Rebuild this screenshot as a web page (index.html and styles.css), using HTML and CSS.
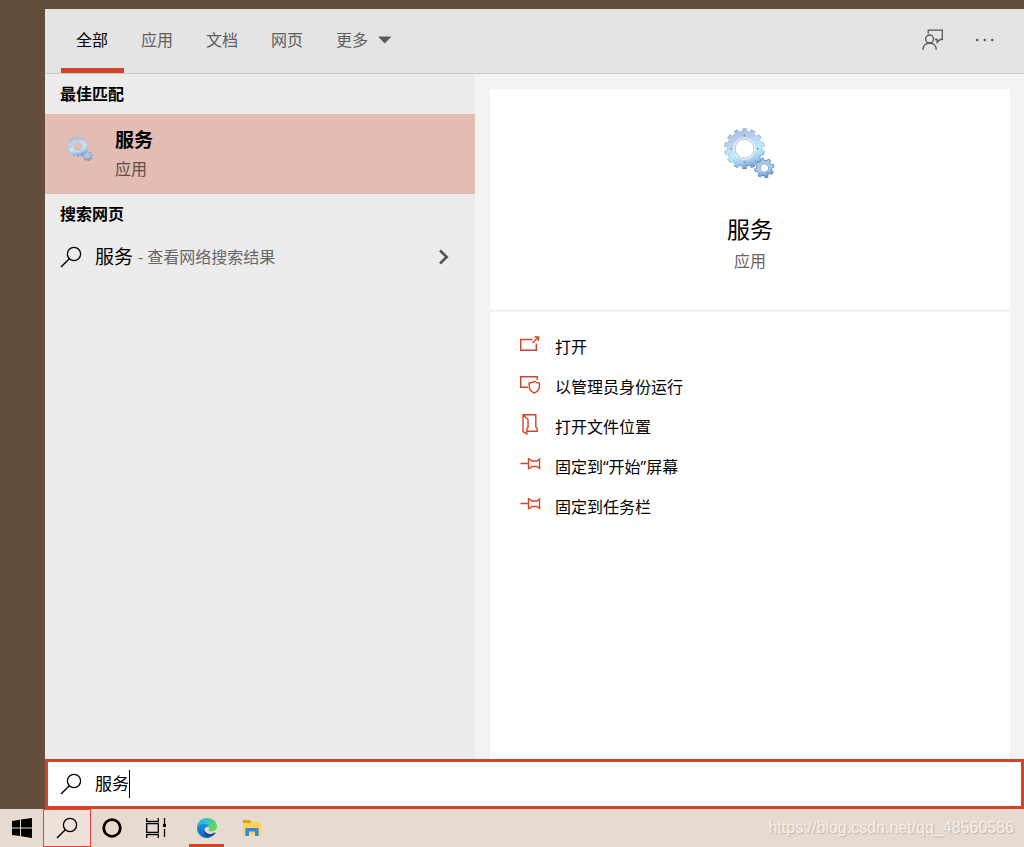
FILE: index.html
```html
<!DOCTYPE html>
<html lang="zh-CN">
<head>
<meta charset="utf-8">
<meta name="viewport" content="width=device-width, initial-scale=1">
<title>服务</title>
<link rel="stylesheet" href="styles.css">
</head>
<body>
<svg class="defs" aria-hidden="true">
  <defs>
    <linearGradient id="steel" gradientUnits="userSpaceOnUse" x1="12" y1="0" x2="25" y2="42">
      <stop offset="0" stop-color="#a3bbdd"/>
      <stop offset="0.3" stop-color="#bccfee"/>
      <stop offset="0.6" stop-color="#bdeefc"/>
      <stop offset="0.8" stop-color="#a4cdf2"/>
      <stop offset="1" stop-color="#6793c6"/>
    </linearGradient>
    <linearGradient id="steel-small" gradientUnits="userSpaceOnUse" x1="38" y1="30" x2="44" y2="50">
      <stop offset="0" stop-color="#b3c4de"/>
      <stop offset="0.6" stop-color="#a5cdf0"/>
      <stop offset="1" stop-color="#5f8cc2"/>
    </linearGradient>
    <linearGradient id="edge" gradientUnits="userSpaceOnUse" x1="8" y1="0" x2="28" y2="50">
      <stop offset="0" stop-color="#93a9c8"/>
      <stop offset="0.5" stop-color="#8fc6ea"/>
      <stop offset="0.8" stop-color="#5c88ba"/>
      <stop offset="1" stop-color="#5a80b0"/>
    </linearGradient>
    <symbol id="gears" viewBox="0 0 54 54">
      <circle cx="21.5" cy="20.7" r="18.2" fill="none" stroke="url(#edge)" stroke-width="4.4" pathLength="28" stroke-dasharray="1.1 0.9" stroke-dashoffset="-0.45"/>
      <circle cx="21.5" cy="20.7" r="13.9" fill="none" stroke="url(#edge)" stroke-width="7.8"/>
      <circle cx="21.5" cy="20.7" r="17.6" fill="none" stroke="url(#steel)" stroke-width="4" pathLength="28" stroke-dasharray="0.9 1.1" stroke-dashoffset="-0.55"/>
      <circle cx="21.5" cy="20.7" r="13.6" fill="none" stroke="url(#steel)" stroke-width="7.2"/>
      <circle cx="21.5" cy="20.7" r="10.4" fill="none" stroke="#e5edf4" stroke-width="1.6"/>
      <circle cx="21.5" cy="20.7" r="9.4" fill="none" stroke="#a9b9ca" stroke-width="0.8"/>
      <g fill="#7590ac"><circle cx="21.5" cy="7.5" r="0.9"/><circle cx="21.5" cy="34" r="0.9"/><circle cx="8.3" cy="20.7" r="0.9"/><circle cx="34.7" cy="20.7" r="0.9"/></g>
      <circle cx="41.3" cy="40" r="8.4" fill="none" stroke="url(#edge)" stroke-width="3.6" pathLength="16" stroke-dasharray="1 1" stroke-dashoffset="-0.9"/>
      <circle cx="41.3" cy="40" r="6" fill="none" stroke="url(#edge)" stroke-width="4.4"/>
      <circle cx="41.3" cy="40" r="7.4" fill="none" stroke="url(#steel-small)" stroke-width="4" pathLength="16" stroke-dasharray="0.7 1.3" stroke-dashoffset="-1.05"/>
      <circle cx="41.3" cy="40" r="5.8" fill="none" stroke="url(#steel-small)" stroke-width="3.2"/>
    </symbol>
    <symbol id="search" viewBox="0 0 22 22">
      <circle cx="14" cy="8" r="6.6" fill="none" stroke="currentColor" stroke-width="1.3"/>
      <path d="M9.3 12.7L1 21" fill="none" stroke="currentColor" stroke-width="1.4"/>
    </symbol>
    <symbol id="pin" viewBox="0 0 22 22">
      <path d="M0.5 9.5H8M8.5 4V15.5M8.5 5.5H10L12 7H17L19.5 5V14.5L17 12.5H12L10 14H8.5" fill="none" stroke="currentColor" stroke-width="1.4"/>
    </symbol>
  </defs>
</svg>

<main class="panel">
  <header class="topbar">
    <nav class="tabs" aria-label="搜索范围">
      <button class="tab tab-active" type="button">全部</button>
      <button class="tab" type="button">应用</button>
      <button class="tab" type="button">文档</button>
      <button class="tab" type="button">网页</button>
      <button class="tab tab-more" type="button">更多
        <svg width="14" height="8" viewBox="0 0 14 8" aria-hidden="true"><path d="M0 0.5H13.5L6.8 7.5Z" fill="#5a5a5a"/></svg>
      </button>
    </nav>
    <div class="tools">
      <button class="tool" type="button" aria-label="反馈">
        <svg width="22" height="22" viewBox="0 0 22 22" fill="none" stroke="#555" stroke-width="1.3" aria-hidden="true">
          <path d="M6.2 4.5V1.2H20.3V10.5H18.2L15.2 13.5V10.5H13"/><circle cx="7.6" cy="10" r="4"/><path d="M1 20.8C1 16.4 4 14 7.6 14S14.2 16.4 14.2 20.8"/>
        </svg>
      </button>
      <button class="tool" type="button" aria-label="选项">
        <svg width="20" height="4" viewBox="0 0 20 4" fill="#555" aria-hidden="true"><circle cx="2.3" cy="2" r="1.3"/><circle cx="9.8" cy="2" r="1.3"/><circle cx="17.3" cy="2" r="1.3"/></svg>
      </button>
    </div>
  </header>

  <div class="content">
    <section class="results">
      <h2 class="group-title">最佳匹配</h2>
      <button class="best" type="button">
        <svg class="best-icon" aria-hidden="true"><use href="#gears"/></svg>
        <span class="best-text"><span class="best-name">服务</span><span class="best-kind">应用</span></span>
      </button>
      <h2 class="group-title">搜索网页</h2>
      <button class="web" type="button">
        <svg class="search-icon" aria-hidden="true"><use href="#search"/></svg>
        <span class="web-name">服务</span>
        <span class="web-hint">- 查看网络搜索结果</span>
        <svg class="chevron" viewBox="0 0 12 16" aria-hidden="true"><path d="M2 1.5L8.7 8L2 14.5" fill="none" stroke="#555" stroke-width="2.6"/></svg>
      </button>
    </section>

    <section class="detail">
      <div class="summary">
        <svg class="summary-icon" aria-hidden="true"><use href="#gears"/></svg>
        <h1 class="summary-name">服务</h1>
        <p class="summary-kind">应用</p>
      </div>
      <div class="actions">
        <button class="action" type="button">
          <svg class="action-icon" viewBox="0 0 22 22" fill="none" stroke="currentColor" stroke-width="1.4" aria-hidden="true"><path d="M12.5 5.5H0.7V16.3H16.3V9.5M12.5 9L18.3 3.2M14.5 3H18.5V7"/></svg>
          打开</button>
        <button class="action" type="button">
          <svg class="action-icon" viewBox="0 0 22 22" fill="none" stroke="currentColor" stroke-width="1.4" aria-hidden="true"><path d="M8 13.3H0.7V2.7H17.3V6M14.3 7.3C12.7 8.6 11 9 9.2 9V12.3C9.2 15.5 11.3 17.8 14.3 19C17.3 17.8 19.4 15.5 19.4 12.3V9C17.6 9 15.9 8.6 14.3 7.3Z"/></svg>
          以管理员身份运行</button>
        <button class="action" type="button">
          <svg class="action-icon" viewBox="0 0 22 22" fill="none" stroke="currentColor" stroke-width="1.4" aria-hidden="true"><path d="M3 0.8H15.8V13L17.2 14.5V17.3H7M3 0.8V17.5L6.8 20V15L8 13.5V5.5Z"/></svg>
          打开文件位置</button>
        <button class="action" type="button"><svg class="action-icon" aria-hidden="true"><use href="#pin"/></svg>固定到“开始”屏幕</button>
        <button class="action" type="button"><svg class="action-icon" aria-hidden="true"><use href="#pin"/></svg>固定到任务栏</button>
      </div>
    </section>
  </div>

  <div class="searchbox">
    <svg class="search-icon" aria-hidden="true"><use href="#search"/></svg>
    <div class="field">
      <input class="query" type="text" value="服务" aria-label="搜索">
      <span class="caret"></span>
    </div>
  </div>
</main>

<footer class="taskbar">
  <button class="task" type="button" aria-label="开始">
    <svg width="22" height="22" viewBox="0 0 22 22" aria-hidden="true"><path d="M1 3.9L9 2.8V10.4H1ZM10 2.6L21 1V10.4H10ZM1 11.5H9V19.1L1 18ZM10 11.5H21V21L10 19.3Z"/></svg>
  </button>
  <button class="task task-search" type="button" aria-label="搜索">
    <svg class="search-icon" aria-hidden="true"><use href="#search"/></svg>
  </button>
  <button class="task" type="button" aria-label="Cortana">
    <svg width="22" height="22" viewBox="0 0 22 22" aria-hidden="true"><circle cx="11" cy="11" r="8.3" fill="none" stroke="#000" stroke-width="2.8"/></svg>
  </button>
  <button class="task" type="button" aria-label="任务视图">
    <svg width="22" height="22" viewBox="0 0 22 22" fill="none" stroke="#000" stroke-width="1.3" aria-hidden="true"><path d="M1.7 1V4.5H13.3V1M1.7 21V17.5H13.3V21M1.7 6.7H13.3V15.3H1.7ZM19.5 1V7M19.5 12V20"/><path d="M18 7H21V10H18Z" fill="#000" stroke="none"/></svg>
  </button>
  <button class="task task-open" type="button" aria-label="Microsoft Edge">
    <svg width="22" height="22" viewBox="0 0 22 22" aria-hidden="true">
      <defs>
        <linearGradient id="eg" x1="0" y1="0" x2="1" y2="0.5"><stop offset="0" stop-color="#25a7e8"/><stop offset="0.5" stop-color="#35c6c0"/><stop offset="1" stop-color="#62dc52"/></linearGradient>
        <linearGradient id="eb" x1="0" y1="0" x2="0" y2="1"><stop offset="0" stop-color="#1b98e0"/><stop offset="1" stop-color="#0d5fb4"/></linearGradient>
      </defs>
      <path d="M1 11C1 5 5.5 1 11 1C17 1 21 5 21 9.6C21 12.6 18.4 14.4 15.6 14.4C13.5 14.4 12.4 13.9 12.4 13.2C12.4 12.7 13.3 12.2 13.3 10.7C13.3 8.5 11 6.7 8 6.7C4.5 6.7 1.8 8.5 1 11Z" fill="url(#eg)"/>
      <path d="M1 11C1.4 8 4.4 6.4 7.6 6.4C10.5 6.4 12.8 7.8 13.2 10C12 9 8.2 10 8.2 13.6C8.2 17 11.2 19.7 15 19.7C13.8 20.6 12.6 21 11 21C5.4 21 1 16.6 1 11Z" fill="url(#eb)"/>
      <path d="M8.2 12.5C7.2 16.6 10.2 20.6 15 19.7C17.2 18.8 18.8 17.2 19.6 15.9C19.8 15.5 19.4 15.3 19 15.5C14.6 18.2 9.4 17 8.2 12.5Z" fill="#0c4a94"/>
    </svg>
  </button>
  <button class="task task-files" type="button" aria-label="文件资源管理器">
    <svg width="22" height="22" viewBox="0 0 22 22" aria-hidden="true"><path d="M2 3H8.5L10.5 5H19V9H2Z" fill="#e3a008"/><path d="M2 6H9L10.5 5H20V17.5H2Z" fill="#ffd35c"/><path d="M4.5 11H17.5V19H14V14.5H8V19H4.5Z" fill="#2e8ad8"/></svg>
  </button>
  <span class="watermark">https://blog.csdn.net/qq_48560586</span>
</footer>
</body>
</html>
```
FILE: styles.css
```css
* { box-sizing: border-box; }

body {
  margin: 0;
  min-height: 100vh;
  display: flex;
  flex-direction: column;
  background: #634e3c;
  color: #000;
  font-family: "Open Sans", "Noto Sans CJK SC", sans-serif;
  font-size: 16px;
  line-height: 24px;
}

button {
  border: 0;
  padding: 0;
  background: none;
  color: inherit;
  font: inherit;
  text-align: left;
}

svg { display: block; flex: none; }
.defs { position: absolute; width: 0; height: 0; }

.panel {
  flex: 1;
  display: flex;
  flex-direction: column;
  margin: 9px 0 0 45px;
}

.topbar {
  display: flex;
  justify-content: space-between;
  height: 65px;
  padding: 0 29px 0 16px;
  background: #e4e4e4;
  border-bottom: 1px solid #cacaca;
}
.tabs { display: flex; gap: 2px; }
.tab {
  padding: 2px 16px 0 15px;
  border-bottom: 5px solid transparent;
  color: #5e5e5e;
}
.tab-active { border-color: #d04527; color: #000; }
.tab-more { display: flex; align-items: center; gap: 10px; }
.tools { display: flex; align-items: center; gap: 31px; padding-bottom: 2px; }

.content { flex: 1; display: flex; }
.results { width: 430px; background: #ececec; }
.group-title {
  margin: 0;
  padding: 8px 15px;
  font-size: 16px;
  font-weight: 700;
}
.best {
  display: flex;
  width: 100%;
  height: 80px;
  padding: 12px 22px;
  gap: 21px;
  background: #e3bcb3;
}
.best-icon { width: 27px; height: 27px; margin-top: 10px; }
.best-text { display: flex; flex-direction: column; gap: 3px; }
.best-name { font-size: 19px; line-height: 28px; font-weight: 700; }
.best-kind { color: #5c4d49; }
.web {
  display: flex;
  align-items: center;
  width: 100%;
  height: 46px;
  padding: 0 25px 0 15px;
}
.search-icon { width: 22px; height: 22px; }
.web-name { margin-left: 13px; font-size: 19px; }
.web-hint { margin-left: 5px; color: #666; }
.chevron { width: 12px; height: 16px; margin-left: auto; }

.detail {
  flex: 1;
  display: flex;
  flex-direction: column;
  gap: 3px;
  padding: 15px 14px 0 15px;
  background: #f3f3f3;
}
.summary {
  display: flex;
  flex-direction: column;
  align-items: center;
  height: 220px;
  padding-top: 39px;
  background: #fff;
}
.summary-icon { width: 54px; height: 54px; }
.summary-name {
  margin: 29px 0 0;
  font-size: 23px;
  line-height: 36px;
  font-weight: 400;
}
.summary-kind { margin: 2px 0 0; color: #666; }
.actions { flex: 1; padding: 15px 0; background: #fff; }
.action {
  display: flex;
  width: 100%;
  height: 40px;
  padding: 8px 30px;
  gap: 13px;
}
.action-icon { width: 22px; height: 22px; color: #d04527; margin-top: -1px; }

.searchbox {
  display: flex;
  align-items: center;
  gap: 13px;
  height: 50px;
  padding-left: 12px;
  background: #fff;
  border: 3px solid #d04527;
}
.field { position: relative; flex: 1; }
.query {
  display: block;
  width: 100%;
  border: 0;
  padding: 0;
  outline: 0;
  background: none;
  font: inherit;
  font-size: 17px;
}
.caret {
  position: absolute;
  left: 34px;
  top: -2px;
  width: 1px;
  height: 28px;
  background: #000;
}

.taskbar {
  display: flex;
  height: 38px;
  background: #e7dad0;
}
.task {
  display: flex;
  align-items: center;
  justify-content: center;
  width: 43px;
}
.task + .task { width: 46px; }
.task + .task-search { width: 48px; border: 1px solid #f43c3c; background: #ece2da; }
.task-search + .task { width: 42px; }
.task + .task-open { width: 35px; margin: 0 10px; border-bottom: 3px solid #d04527; padding-top: 3px; }
.task + .task-files { width: 36px; }
.watermark {
  margin-left: auto;
  padding: 7px 10px 0 0;
  color: #f7f1ec;
  font-family: "Liberation Sans", Arial, sans-serif;
  text-shadow: 1px 1px 1px #bfb3aa;
}
```
